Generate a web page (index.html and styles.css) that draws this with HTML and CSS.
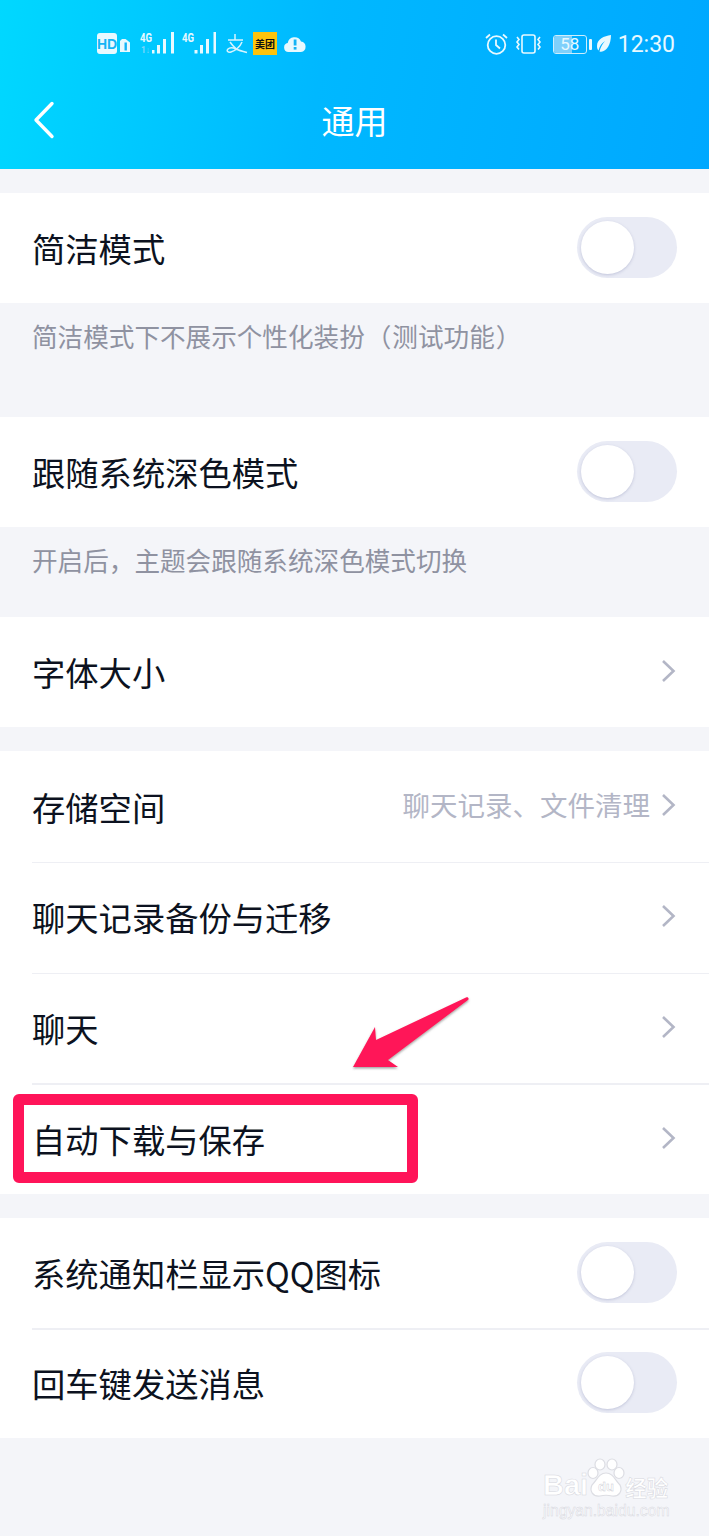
FILE: index.html
```html
<!DOCTYPE html>
<html lang="zh">
<head>
<meta charset="utf-8">
<title>通用</title>
<link rel="stylesheet" href="styles.css">
</head>
<body>
<div class="page">
  <header class="header">
    <div class="status">
      <div class="status-left">
        <svg class="ic" width="43" height="24" viewBox="0 0 43 24"><rect x="0" y="1" width="20" height="21" rx="3" fill="#e8f9ff"/><text x="10" y="17" class="hd">HD</text><path d="M26 7h3.500l4.500 3.500V20h-10V9z" fill="#e8f9ff" transform="translate(-1 0)"/><rect x="27.500" y="10.500" width="2.400" height="8" fill="#14b4f5"/></svg>
        <svg class="ic sig" width="42" height="30" viewBox="0 -6 42 30"><text x="0" y="10" class="tiny" textLength="12" lengthAdjust="spacingAndGlyphs">4G</text><text x="1" y="21" class="tiny dim" textLength="9" lengthAdjust="spacingAndGlyphs">1↓</text><rect x="12" y="18" width="2.500" height="3.500" fill="#e8f9ff"/><rect x="17" y="13" width="3" height="8.500" fill="#e8f9ff"/><rect x="23" y="7" width="3" height="14.500" fill="#e8f9ff"/><rect x="31" y="0" width="3" height="21.500" fill="#e8f9ff"/></svg>
        <svg class="ic sig" width="44" height="30" viewBox="0 -6 44 30"><text x="0" y="10" class="tiny" textLength="12" lengthAdjust="spacingAndGlyphs">4G</text><rect x="12.500" y="18" width="3" height="3.500" fill="#e8f9ff"/><rect x="18" y="13" width="3" height="8.500" fill="#e8f9ff"/><rect x="24" y="7" width="3" height="14.500" fill="#e8f9ff"/><rect x="31.500" y="0" width="2.500" height="21.500" fill="#e8f9ff"/></svg>
        <svg class="ic alipay" width="27" height="22" viewBox="0 0 27 22"><path d="M9 0v6M2 6h15M16 8c-2 5-7 9-11 10-3 .7-5-1-3-3 2-2 5-1.500 8 0 3 1.500 7 2.500 11 3.500M4 8c2 3 4 5 6 6.500" fill="none" stroke="#d5f4ff" stroke-width="1.500"/></svg>
        <div class="meituan">美团</div>
        <svg class="ic cloud" width="22" height="16" viewBox="0 0 22 16"><path d="M4.500 16a4.500 4.500 0 0 1-.8-8.900A7 7 0 0 1 17 5.500 5.300 5.300 0 0 1 17 16z" fill="#e8f9ff"/><rect x="9.700" y="3.500" width="2.800" height="6" fill="#14b4f5"/><rect x="9.700" y="11" width="2.800" height="2.600" fill="#14b4f5"/></svg>
      </div>
      <div class="status-right">
        <svg class="ic" width="23" height="22" viewBox="0 0 23 22"><circle cx="11.500" cy="12" r="8.800" fill="none" stroke="#e8f9ff" stroke-width="1.800"/><path d="M11 6.500V12l4 3.500" fill="none" stroke="#e8f9ff" stroke-width="1.800"/><path d="M1 5l4-3.500M22 5l-4-3.500" stroke="#e8f9ff" stroke-width="1.800"/></svg>
        <svg class="ic" width="27" height="20" viewBox="0 0 27 20"><rect x="7" y="1" width="13" height="18" rx="2" fill="none" stroke="#e8f9ff" stroke-width="1.600"/><path d="M2 3l2 2.500-2 2.500 2 2.500-2 2.500 2 2.500M25 3l-2 2.500 2 2.500-2 2.500 2 2.500-2 2.500" fill="none" stroke="#e8f9ff" stroke-width="1.600"/></svg>
        <div class="battery"><div class="battery-fill"></div><span class="battery-num">58</span></div>
        <div class="battery-tip"></div>
        <svg class="ic leaf" width="16" height="18" viewBox="0 0 16 18"><path d="M15 0C8 1 1 4 1 11c0 2 .6 3.500 1.500 4.500C3.500 11 6 8 9 6 6.500 9 4.500 12 3.500 16.500 10 18 15 10 15 0z" fill="#e8f9ff"/></svg>
        <span class="time">12:30</span>
      </div>
    </div>
    <div class="nav">
      <svg class="back" width="22" height="38" viewBox="0 0 22 38"><path d="M19 2.500L3 19l16 16.500" fill="none" stroke="#fff" stroke-width="3.400" stroke-linecap="round" stroke-linejoin="round"/></svg>
      <h1 class="title">通用</h1>
    </div>
  </header>

  <section class="group first">
    <div class="row"><span class="label">简洁模式</span><span class="toggle"></span></div>
  </section>
  <p class="note tall">简洁模式下不展示个性化装扮<span class="bracket">（</span>测试功能<span class="bracket">）</span></p>

  <section class="group">
    <div class="row"><span class="label">跟随系统深色模式</span><span class="toggle"></span></div>
  </section>
  <p class="note">开启后，主题会跟随系统深色模式切换</p>

  <section class="group">
    <div class="row"><span class="label">字体大小</span><svg class="chev" width="15" height="24" viewBox="0 0 15 24"><path d="M2 2l10.500 10L2 22" fill="none" stroke="#b3b6c6" stroke-width="2.600"/></svg></div>
  </section>

  <section class="group gap wide">
    <div class="row"><span class="label">存储空间</span><span class="value">聊天记录、文件清理</span><svg class="chev" width="15" height="24" viewBox="0 0 15 24"><path d="M2 2l10.500 10L2 22" fill="none" stroke="#b3b6c6" stroke-width="2.600"/></svg></div>
    <div class="row line"><span class="label">聊天记录备份与迁移</span><svg class="chev" width="15" height="24" viewBox="0 0 15 24"><path d="M2 2l10.500 10L2 22" fill="none" stroke="#b3b6c6" stroke-width="2.600"/></svg></div>
    <div class="row line"><span class="label">聊天</span><svg class="chev" width="15" height="24" viewBox="0 0 15 24"><path d="M2 2l10.500 10L2 22" fill="none" stroke="#b3b6c6" stroke-width="2.600"/></svg></div>
    <div class="row line"><span class="label">自动下载与保存</span><svg class="chev" width="15" height="24" viewBox="0 0 15 24"><path d="M2 2l10.500 10L2 22" fill="none" stroke="#b3b6c6" stroke-width="2.600"/></svg></div>
  </section>

  <section class="group gap">
    <div class="row"><span class="label">系统通知栏显示QQ图标</span><span class="toggle"></span></div>
    <div class="row line"><span class="label">回车键发送消息</span><span class="toggle"></span></div>
  </section>

  <svg class="arrow" width="125" height="85" viewBox="0 0 125 85"><defs><filter id="sh" x="-10%" y="-10%" width="120%" height="130%"><feDropShadow dx="0" dy="1.500" stdDeviation="1.200" flood-color="#555" flood-opacity=".55"/></filter></defs><path d="M114 3.500c2-1 3.500 1 2 2.500L36 66l10 7H1L23 33l1 13z" fill="#ff1459" filter="url(#sh)"/></svg>
  <div class="highlight"></div>

  <div class="mark">
    <div class="mark-top"><span class="mark-bai">Bai</span><svg class="paw" width="38" height="40" viewBox="0 0 38 40"><g fill="#fff" stroke="#dcdde3" stroke-width="1.200"><ellipse cx="13" cy="6.500" rx="5" ry="5.500"/><ellipse cx="25" cy="6.500" rx="5" ry="5.500"/><ellipse cx="6" cy="15" rx="5" ry="5.500"/><ellipse cx="32" cy="15" rx="5" ry="5.500"/><path d="M19 15c7 0 9 7 14 12 3 6-1 12-8 11-4-1-8-1-12 0-7 1-11-5-8-11 5-5 7-12 14-12z"/></g><text x="19" y="33" class="mark-du">du</text></svg><span class="mark-cn">经验</span></div>
    <div class="mark-url">jingyan.baidu.com</div>
  </div>
</div>
</body>
</html>
```
FILE: styles.css
```css
* { box-sizing: border-box; }
html, body { margin: 0; padding: 0; }
body {
  font-family: "Liberation Sans", "Noto Sans CJK SC", sans-serif;
  background: #f4f5f9;
}
.page {
  position: relative;
  width: 709px;
  height: 1536px;
  overflow: hidden;
  background: #f4f5f9;
}
.header {
  height: 169px;
  background: linear-gradient(100deg, #00d8ff 0%, #00b8ff 45%, #00a8ff 100%);
  color: #fff;
}
.status {
  height: 87px;
  display: flex;
  justify-content: space-between;
  align-items: flex-start;
  padding: 32px 34px 0 97px;
}
.status-left, .status-right { display: flex; align-items: flex-start; }
.status-right { align-items: center; height: 24px; }
.ic { display: block; flex: none; }
.sig { margin-top: -6px; }
.hd { font: bold 14px "Liberation Sans", sans-serif; fill: #14b4f5; text-anchor: middle; }
.tiny { font: bold 13px "Roboto", sans-serif; fill: #e8f9ff; }
.dim { font-size: 9px; fill: #7fd6fa; }
.alipay { margin-top: 2px; }
.meituan {
  flex: none;
  width: 24px;
  height: 23px;
  margin-right: 7px;
  background: #fdc30c;
  color: #111;
  font: 700 10px/23px "Noto Sans CJK SC", sans-serif;
  text-align: center;
  white-space: nowrap;
  overflow: hidden;
}
.cloud { margin-top: 4px; }
.status-right .ic:nth-child(2) { margin-left: 7px; }
.battery {
  position: relative;
  width: 34px;
  height: 19px;
  margin-left: 11px;
  border: 1px solid #cdeefd;
  border-radius: 3px;
  overflow: hidden;
}
.battery-fill { height: 100%; width: 58%; background: #7fd0fb; }
.battery-num {
  position: absolute;
  inset: 0;
  text-align: center;
  font: 17px/17px "Roboto", sans-serif;
  color: #e8f9ff;
}
.battery-tip { width: 3px; height: 11px; margin-left: 2px; background: #e8f9ff; border-radius: 1px; }
.leaf { margin-left: 4px; }
.time { margin-left: 6px; margin-top: 2px; font: 23px/24px "Roboto", sans-serif; color: #e8f9ff; }
.nav {
  position: relative;
  height: 82px;
  display: flex;
  align-items: center;
  justify-content: center;
  padding-bottom: 16px;
}
.back { position: absolute; left: 33px; top: 14px; }
.title { margin: 0; font: 400 33px/1 "Noto Sans CJK SC", sans-serif; color: #fff; }

.group { background: #fff; margin: 0; }
.group.first { margin-top: 24px; }
.group.gap { margin-top: 24px; }
.row {
  position: relative;
  height: 110px;
  display: flex;
  align-items: center;
  padding: 0 32px;
}
.wide .row { height: 110.750px; }
.row.line::before {
  content: "";
  position: absolute;
  left: 32px;
  right: 0;
  top: 0;
  height: 1.500px;
  background: #eeeff4;
}
.label {
  flex: 1;
  font: 400 33.300px/1 "Noto Sans CJK SC", sans-serif;
  color: #0c1220;
  white-space: nowrap;
}
.value {
  font: 400 27.500px/1 "Noto Sans CJK SC", sans-serif;
  color: #b3b6c6;
  margin-right: 11px;
  margin-top: -4px;
  white-space: nowrap;
}
.chev { flex: none; margin-right: 1px; margin-top: -2px; }
.toggle {
  position: relative;
  flex: none;
  width: 100px;
  height: 61px;
  margin-top: -1px;
  border-radius: 31px;
  background: #e9ebf5;
}
.toggle::after {
  content: "";
  position: absolute;
  left: 4px;
  top: 4px;
  width: 53px;
  height: 53px;
  border-radius: 50%;
  background: #fff;
  box-shadow: 0 1px 3px rgba(120, 125, 170, .35);
}
.note {
  margin: 0;
  height: 90px;
  padding: 18px 32px 0;
  font: 400 25.600px/30px "Noto Sans CJK SC", sans-serif;
  color: #8f92a1;
  white-space: nowrap;
}
.note.tall { height: 114px; }
.bracket { margin: 0 1px; }
.arrow { position: absolute; left: 352px; top: 994px; }
.highlight {
  position: absolute;
  left: 13px;
  top: 1094px;
  width: 405px;
  height: 89px;
  border: 11px solid #ff1459;
  border-radius: 6px;
}
.mark {
  position: absolute;
  left: 543px;
  top: 1458px;
  width: 130px;
  color: #fff;
  -webkit-text-stroke: .5px #d6d7de;
}
.mark-top { display: flex; align-items: flex-end; height: 40px; }
.paw { flex: none; margin-left: -1px; }
.mark-bai { font: bold 29px/25px "Liberation Sans", sans-serif; }
.mark-cn { font: 700 21.500px/23px "Noto Sans CJK SC", sans-serif; }
.mark-du { font: bold 13px "Liberation Sans", sans-serif; fill: #fff; stroke: #c8c9d1; stroke-width: .4px; text-anchor: middle; }
.mark-url { font: 15.700px/18px "Liberation Sans", sans-serif; margin-top: 4px; white-space: nowrap; }
```
